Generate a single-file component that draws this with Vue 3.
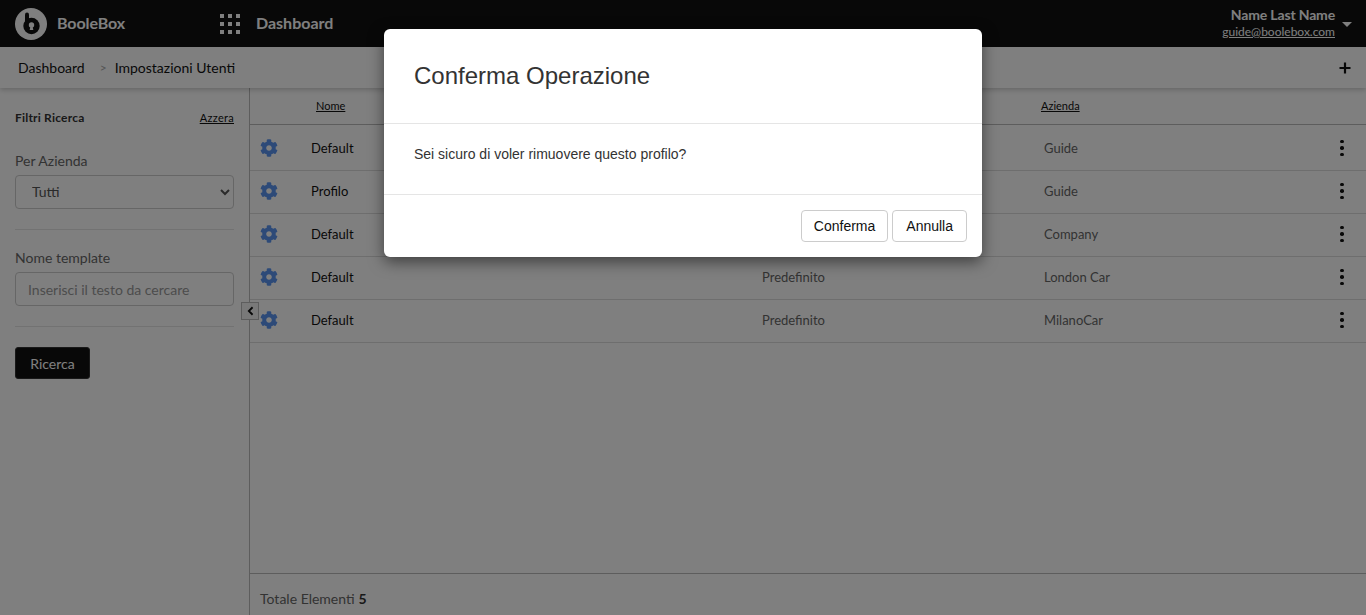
<template>
  <div class="page">
    <header class="topbar">
      <div class="brand">
        <svg class="logo" viewBox="0 0 32 32" width="32" height="32">
          <circle cx="16" cy="16" r="16" fill="#fff" />
          <path d="M12 6.5V18" stroke="#111" stroke-width="4" stroke-linecap="round" fill="none" />
          <circle cx="16.5" cy="18" r="8.2" fill="#111" />
          <circle cx="16.5" cy="17" r="2.7" fill="#fff" />
          <path d="M15.5 18h2l.8 4h-3.6z" fill="#fff" />
        </svg>
        <span class="brand-name">BooleBox</span>
      </div>
      <div class="apps">
        <span v-for="n in 9" :key="n" class="apps-dot"></span>
      </div>
      <span class="section-name">Dashboard</span>
      <div class="user">
        <div class="user-text">
          <div class="user-name">Name Last Name</div>
          <a class="user-mail">guide@boolebox.com</a>
        </div>
        <span class="caret"></span>
      </div>
    </header>

    <nav class="crumbs">
      <span class="crumb">Dashboard</span>
      <span class="crumb-sep">&gt;</span>
      <span class="crumb-current">Impostazioni Utenti</span>
      <svg class="plus" viewBox="0 0 12 12" width="12" height="12">
        <path d="M6 0.5v11M0.5 6h11" stroke="#111" stroke-width="2.2" />
      </svg>
    </nav>

    <div class="content">
      <aside class="sidebar">
        <div class="filter-head">
          <span class="filter-title">Filtri Ricerca</span>
          <a class="reset">Azzera</a>
        </div>
        <label class="field-label first">Per Azienda</label>
        <select class="control select">
          <option>Tutti</option>
        </select>
        <hr class="divider" />
        <label class="field-label">Nome template</label>
        <input class="control input" placeholder="Inserisci il testo da cercare" />
        <hr class="divider" />
        <button class="search-btn">Ricerca</button>
        <button class="collapse">
          <svg viewBox="0 0 8 12" width="7" height="10">
            <path d="M6.5 1.5L2 6l4.5 4.5" fill="none" stroke="#111" stroke-width="2.2" />
          </svg>
        </button>
      </aside>

      <main class="main">
        <div class="table-head">
          <span></span>
          <a class="head-name">Nome</a>
          <a class="head-type">Tipo</a>
          <a class="head-company">Azienda</a>
        </div>
        <div class="rows">
          <div v-for="row in rows" :key="row.id" class="row">
            <svg class="gear" viewBox="0 0 512 512" width="18" height="18">
              <path fill="#5a94f0" d="M487.4 315.7l-42.6-24.6c4.3-23.2 4.3-47 0-70.2l42.6-24.6c4.9-2.8 7.1-8.6 5.5-14-11.1-35.6-30-67.8-54.7-94.6-3.8-4.1-10-5.1-14.8-2.3L380.8 110c-17.9-15.4-38.5-27.3-60.8-35.1V25.8c0-5.6-3.9-10.5-9.4-11.7-36.7-8.2-74.3-7.8-109.2 0-5.5 1.2-9.4 6.1-9.4 11.7V75c-22.2 7.9-42.8 19.8-60.8 35.1L88.7 85.5c-4.9-2.8-11-1.9-14.8 2.3-24.7 26.7-43.6 58.9-54.7 94.6-1.7 5.4.6 11.2 5.5 14L67.3 221c-4.3 23.2-4.3 47 0 70.2l-42.6 24.6c-4.9 2.8-7.1 8.6-5.5 14 11.1 35.6 30 67.8 54.7 94.6 3.8 4.1 10 5.1 14.8 2.3l42.6-24.6c17.9 15.4 38.5 27.3 60.8 35.1v49.2c0 5.6 3.9 10.5 9.4 11.7 36.7 8.2 74.3 7.8 109.2 0 5.5-1.2 9.4-6.1 9.4-11.7v-49.2c22.2-7.9 42.8-19.8 60.8-35.1l42.6 24.6c4.9 2.8 11 1.9 14.8-2.3 24.7-26.7 43.6-58.9 54.7-94.6 1.5-5.5-.7-11.3-5.6-14.1zM256 336c-44.1 0-80-35.9-80-80s35.9-80 80-80 80 35.9 80 80-35.9 80-80 80z" />
            </svg>
            <span class="cell-name">{{ row.name }}</span>
            <span class="cell-muted">Predefinito</span>
            <span class="cell-muted">{{ row.company }}</span>
            <span class="dots"><i></i><i></i><i></i></span>
          </div>
        </div>
        <footer class="table-foot">Totale Elementi <b>{{ rows.length }}</b></footer>
      </main>
    </div>

    <div class="backdrop">
      <div class="modal">
        <div class="modal-header">
          <h4>Conferma Operazione</h4>
        </div>
        <div class="modal-body">Sei sicuro di voler rimuovere questo profilo?</div>
        <div class="modal-footer">
          <button class="btn">Conferma</button>
          <button class="btn">Annulla</button>
        </div>
      </div>
    </div>
  </div>
</template>

<script setup>
const rows = [
  { id: 1, name: 'Default', company: 'Guide' },
  { id: 2, name: 'Profilo', company: 'Guide' },
  { id: 3, name: 'Default', company: 'Company' },
  { id: 4, name: 'Default', company: 'London Car' },
  { id: 5, name: 'Default', company: 'MilanoCar' }
]
</script>

<style>
html,
body {
  margin: 0;
  overflow: hidden;
}
</style>

<style scoped>
.page {
  height: 615px;
  display: flex;
  flex-direction: column;
  position: relative;
  background: #fff;
  font-family: Lato, "Liberation Sans", sans-serif;
  font-size: 14px;
  color: #333;
  overflow: hidden;
}
.topbar {
  height: 47px;
  flex: none;
  box-sizing: border-box;
  display: flex;
  align-items: center;
  background: #111;
  color: #fff;
  padding: 0 14px 3px 15px;
}
.brand {
  display: flex;
  align-items: center;
  width: 205px;
}
.logo {
  margin-right: 10px;
  margin-top: 3px;
}
.brand-name {
  font-size: 16px;
  font-weight: 700;
  letter-spacing: -0.1px;
}
.apps {
  display: grid;
  grid-template-columns: repeat(3, 4px);
  gap: 4px;
  width: 36px;
  margin-top: 3px;
}
.apps-dot {
  width: 4px;
  height: 4px;
  background: #fff;
}
.section-name {
  font-size: 16px;
  font-weight: 700;
  letter-spacing: 0;
}
.user {
  margin-left: auto;
  display: flex;
  align-items: center;
  margin-top: 3px;
}
.user-text {
  text-align: right;
  margin-right: 7px;
}
.user-name {
  font-size: 14px;
  font-weight: 700;
  line-height: 16px;
  letter-spacing: -0.15px;
  margin: -1px 0 1px;
}
.user-mail {
  display: block;
  font-size: 12px;
  line-height: 16px;
  text-decoration: underline;
}
.caret {
  width: 0;
  height: 0;
  border-left: 5px solid transparent;
  border-right: 5px solid transparent;
  border-top: 5px solid #fff;
  margin-top: 2px;
}
.crumbs {
  height: 41px;
  flex: none;
  display: flex;
  align-items: center;
  padding: 0 15px 0 18px;
  background: #fff;
  box-shadow: 0 2px 5px rgba(0, 0, 0, 0.2);
  position: relative;
  z-index: 1;
  color: #111;
}
.crumb-sep {
  margin: 0 8px 0 15px;
  color: #aaa;
  font-size: 12px;
}
.plus {
  margin-left: auto;
}
.content {
  flex: 1;
  display: flex;
  min-height: 0;
}
.sidebar {
  width: 250px;
  flex: none;
  box-sizing: border-box;
  border-right: 1px solid #bbb;
  padding: 0 15px;
  position: relative;
}
.filter-head {
  display: flex;
  justify-content: space-between;
  align-items: center;
  height: 20px;
  margin-top: 19px;
}
.filter-title {
  font-size: 12px;
  font-weight: 700;
  letter-spacing: 0.2px;
}
.reset {
  font-size: 11px;
  color: #111;
  text-decoration: underline;
  letter-spacing: 0.3px;
}
.field-label {
  display: block;
  color: #666;
  font-size: 14px;
  line-height: 20px;
  margin-bottom: 4px;
}
.field-label.first {
  margin-top: 24px;
}
.control {
  display: block;
  box-sizing: border-box;
  width: 219px;
  height: 34px;
  border: 1px solid #ccc;
  border-radius: 4px;
  background: #fff;
  font-family: Lato, "Liberation Sans", sans-serif;
  font-size: 14px;
  color: #555;
  outline: none;
}
.select {
  padding: 0 0 2px 12px;
}
.input {
  padding: 0 12px;
}
.input::placeholder {
  color: #999;
  opacity: 1;
}
.divider {
  border: 0;
  border-top: 1px solid #e5e5e5;
  margin: 20px 0 18px;
}
.search-btn {
  display: block;
  width: 75px;
  height: 32px;
  margin-top: 20px;
  border: 1px solid #333;
  border-radius: 3px;
  background: #111;
  color: #fff;
  font-family: Lato, "Liberation Sans", sans-serif;
  font-size: 14px;
}
.collapse {
  position: absolute;
  top: 214px;
  right: -10px;
  width: 18px;
  height: 18px;
  padding: 0;
  display: flex;
  align-items: center;
  justify-content: center;
  background: #f3f3f3;
  border: 1px solid #bbb;
  z-index: 2;
}
.main {
  flex: 1;
  display: flex;
  flex-direction: column;
  min-width: 0;
}
.table-head,
.row {
  display: grid;
  grid-template-columns: 61px 451px 282px 1fr 48px;
  align-items: center;
}
.table-head {
  height: 37px;
  flex: none;
  box-sizing: border-box;
  border-bottom: 1px solid #bbb;
  font-size: 11px;
  color: #111;
  padding-bottom: 2px;
}
.table-head a {
  text-decoration: underline;
}
.head-name {
  padding-left: 5px;
}
.head-company {
  margin-left: -3px;
}
.rows {
  flex: 1;
}
.row {
  height: 43px;
  box-sizing: border-box;
  border-bottom: 1px solid #ddd;
  padding-bottom: 3px;
  font-size: 13px;
}
.row:first-child {
  height: 46px;
  padding-bottom: 0;
}
.gear {
  margin-left: 10px;
}
.cell-name {
  color: #111;
}
.cell-muted {
  color: #666;
}
.dots {
  display: flex;
  flex-direction: column;
  align-items: center;
  gap: 3px;
  width: 8px;
  margin: 1px 0 0 20px;
}
.dots i {
  width: 3.5px;
  height: 3.5px;
  border-radius: 50%;
  background: #111;
}
.table-foot {
  height: 42px;
  flex: none;
  box-sizing: border-box;
  display: flex;
  align-items: center;
  gap: 4px;
  border-top: 1px solid #bbb;
  padding: 7px 10px 0;
  color: #666;
}
.table-foot b {
  color: #333;
}
.backdrop {
  position: absolute;
  inset: 0;
  z-index: 10;
  background: rgba(0, 0, 0, 0.5);
  display: flex;
  justify-content: center;
  align-items: flex-start;
}
.modal {
  width: 598px;
  margin-top: 29px;
  background: #fff;
  border-radius: 6px;
  box-shadow: 0 5px 15px rgba(0, 0, 0, 0.5);
  font-family: "Liberation Sans", Arial, sans-serif;
}
.modal-header {
  height: 95px;
  box-sizing: border-box;
  padding: 30px;
  border-bottom: 1px solid #e5e5e5;
}
.modal-header h4 {
  margin: 0;
  font-size: 24px;
  font-weight: 400;
  line-height: 34px;
  color: #333;
}
.modal-body {
  height: 71px;
  box-sizing: border-box;
  padding: 20px 30px 0;
  line-height: 20px;
  color: #333;
  border-bottom: 1px solid #e5e5e5;
}
.modal-footer {
  display: flex;
  justify-content: flex-end;
  gap: 4px;
  padding: 15px;
}
.btn {
  height: 32px;
  padding: 0 12px;
  border: 1px solid #ccc;
  border-radius: 4px;
  background: #fff;
  color: #111;
  font-family: "Liberation Sans", Arial, sans-serif;
  font-size: 14px;
}
.btn:last-child {
  padding: 0 13px;
}
</style>
